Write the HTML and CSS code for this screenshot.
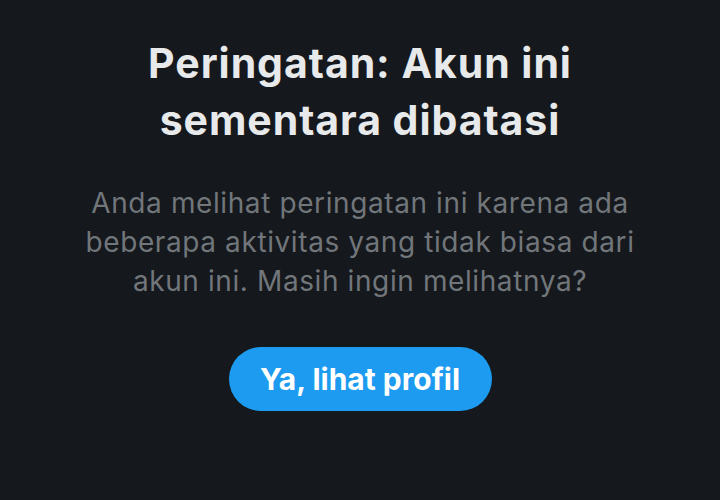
FILE: index.html
```html
<!DOCTYPE html>
<html lang="id">
<head>
<meta charset="utf-8">
<link rel="stylesheet" href="styles.css">
</head>
<body>
<main class="screen">
  <h1 class="title">Peringatan: Akun ini<br>sementara dibatasi</h1>
  <p class="desc">Anda melihat peringatan ini karena ada<br>beberapa aktivitas yang tidak biasa dari<br>akun ini. Masih ingin melihatnya?</p>
  <button class="cta">Ya, lihat profil</button>
</main>
</body>
</html>
```
FILE: styles.css
```css
html, body {
  margin: 0;
  padding: 0;
  background: #15181c;
}
body {
  width: 720px;
  height: 500px;
  overflow: hidden;
  font-family: Inter, "Noto Sans", sans-serif;
}
.screen {
  display: flex;
  flex-direction: column;
  align-items: center;
  padding-top: 35px;
}
.title {
  margin: 0;
  font-size: 41px;
  line-height: 57px;
  font-weight: 700;
  letter-spacing: 0.95px;
  color: #e7e9ea;
  text-align: center;
}
.desc {
  margin: 35px 0 0;
  font-size: 28px;
  line-height: 39px;
  font-weight: 400;
  letter-spacing: 0.6px;
  color: #71767b;
  text-align: center;
}
.cta {
  margin-top: 46px;
  width: 263px;
  height: 64px;
  border: none;
  border-radius: 32px;
  background: #1d9bf0;
  color: #ffffff;
  font-family: Inter, "Noto Sans", sans-serif;
  font-size: 30px;
  font-weight: 700;
  padding: 0;
}
```
